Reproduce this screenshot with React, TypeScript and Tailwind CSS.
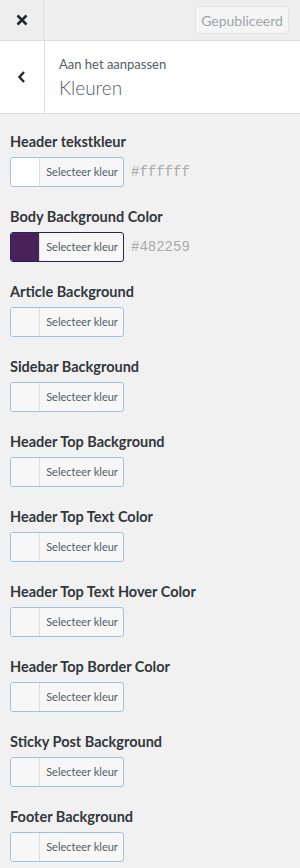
const controls: { label: string; color?: string; hex?: string; dark?: boolean }[] = [
  { label: 'Header tekstkleur', color: '#ffffff', hex: '#ffffff' },
  { label: 'Body Background Color', color: '#482259', hex: '#482259', dark: true },
  { label: 'Article Background' },
  { label: 'Sidebar Background' },
  { label: 'Header Top Background' },
  { label: 'Header Top Text Color' },
  { label: 'Header Top Text Hover Color' },
  { label: 'Header Top Border Color' },
  { label: 'Sticky Post Background' },
  { label: 'Footer Background' },
]

function ColorControl({ label, color, hex, dark }: (typeof controls)[number]) {
  return (
    <div className="mb-[20px]">
      <div className="h-[20px] text-[14.5px] font-bold leading-[20px] text-[#32373c]">{label}</div>
      <div className="mt-[5px] flex items-center">
        <button
          type="button"
          className={
            dark
              ? 'flex h-[30px] w-[114px] overflow-hidden rounded-[3px] border border-[#2a2060] bg-[#f7f7f7]'
              : 'flex h-[30px] w-[114px] overflow-hidden rounded-[3px] border border-[#9ec2e2] bg-[#f7f7f7]'
          }
        >
          <span
            className="h-full w-[29px] border-r border-[#dddddd]"
            style={{ backgroundColor: color ?? '#f7f7f7' }}
          />
          <span className="flex-1 pl-[1px] text-center text-[11px] leading-[28px] text-[#555d66]">Selecteer kleur</span>
        </button>
        {hex && (
          <span className="ml-[7px] font-['Liberation_Mono',monospace] text-[14px] text-[#aaaaaa]">{hex}</span>
        )}
      </div>
    </div>
  )
}

export default function App() {
  return (
    <div className="min-h-[868px] w-[300px] bg-[#f1f1f1] font-['Lato','Noto_Sans',sans-serif]">
      <div className="flex h-[41px] items-center border-b border-[#dddddd] bg-[#eeeeee]">
        <div className="flex h-full w-[44px] items-center justify-center border-r border-[#dddddd]">
          <svg width="12" height="12" viewBox="0 0 12 12" aria-hidden="true">
            <path d="M1.5 1.5 L10.5 10.5 M10.5 1.5 L1.5 10.5" stroke="#23282d" strokeWidth="2.6" />
          </svg>
        </div>
        <div className="flex flex-1 justify-end pr-[11px]">
          <button
            type="button"
            disabled
            className="h-[28px] w-[94px] rounded-[3px] border border-[#e2e2e2] bg-[#f5f5f5] text-[14px] text-[#a0a5aa]"
          >
            Gepubliceerd
          </button>
        </div>
      </div>

      <div className="flex h-[73px] border-b border-[#dddddd] bg-white">
        <div className="flex w-[45px] items-center justify-center border-r border-[#dddddd]">
          <svg width="10" height="14" viewBox="0 0 10 14" aria-hidden="true">
            <path d="M7 2 L2.5 7 L7 12" stroke="#23282d" strokeWidth="2.4" fill="none" />
          </svg>
        </div>
        <div className="flex flex-col justify-center pl-[14px] pt-[2px]">
          <div className="text-[13px] leading-[16px] text-[#555d66]">Aan het aanpassen</div>
          <div className="mt-[4px] text-[19px] font-light leading-[24px] text-[#555d66]">Kleuren</div>
        </div>
      </div>

      <div className="px-[10px] pt-[18px]">
        {controls.map((c) => (
          <ColorControl key={c.label} {...c} />
        ))}
      </div>
    </div>
  )
}
